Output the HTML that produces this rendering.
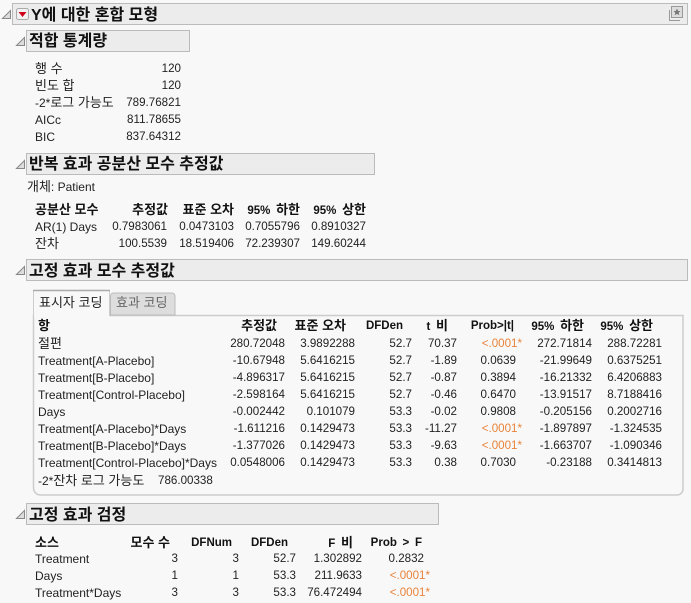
<!DOCTYPE html>
<html><head><meta charset="utf-8"><style>
html,body{margin:0;padding:0;background:#f8f8f8}
#p{position:relative;width:691px;height:603px;overflow:hidden;background:#f8f8f8;font-family:"Liberation Sans","Noto Sans CJK KR",sans-serif;font-size:12px;color:#222}
#p span{position:absolute;white-space:nowrap;line-height:16px;height:16px}
#p span[style*="right"]:not(.b){font-size:11.6px}
#p .b{font-weight:bold;color:#111;font-size:11.5px;word-spacing:2.5px}
#p .o{color:#e8843c}
#p .h{font-weight:bold;font-size:16px;line-height:20px;height:20px;color:#111}
k{font-size:13px;word-spacing:0}
#p .h k{font-size:16px}
.x{position:absolute;box-sizing:border-box;background:#ececec;border:1px solid #bbb}
svg{position:absolute}
</style></head><body><div id="p">
<div class="x" style="left:12px;top:3px;width:676px;height:22px"></div>
<div class="x" style="left:26px;top:30px;width:164px;height:22px"></div>
<div class="x" style="left:26px;top:153px;width:349px;height:22px"></div>
<div class="x" style="left:26px;top:259px;width:662px;height:22px"></div>
<div class="x" style="left:26px;top:503px;width:413px;height:22px"></div>

<svg style="left:0;top:0" width="691" height="603">
<g fill="#ddd" stroke="#888" stroke-width="1">
<path d="M2.5 18.5L10.5 10.5V18.5Z"/><path d="M16.5 45.5L24.5 37.5V45.5Z"/><path d="M16.5 168.5L24.5 160.5V168.5Z"/><path d="M16.5 274.5L24.5 266.5V274.5Z"/><path d="M16.5 518.5L24.5 510.5V518.5Z"/>
</g>
<rect x="16.5" y="8.5" width="12" height="11" rx="2" fill="#f2f2f2" stroke="#aaa"/>
<path d="M18.5 12H26.5L22.5 17Z" fill="#d0021b"/>
<rect x="671.5" y="6.5" width="11" height="11" fill="#ddd" stroke="#999"/>
<path d="M669.5 10V20.5H680" fill="none" stroke="#999"/>
<path d="M677 8.5L678.2 11H680.5L678.7 12.7L679.3 15.2L677 13.9L674.7 15.2L675.3 12.7L673.5 11H675.8Z" fill="#777"/>
<path d="M33.5 315.5V488a7 7 0 0 0 7 7H677a6 6 0 0 0 6-6V315.5Z" fill="#f8f8f8" stroke="#ccc" stroke-width="1.5"/>
<path d="M110.5 315V296a3 3 0 0 1 3-3H172a3 3 0 0 1 3 3V315Z" fill="#ddd" stroke="#bbb"/>
<path d="M33.5 315.5V290.5H109.5V315.5" fill="#f8f8f8" stroke="#ccc"/>
<path d="M33 290.5H110" stroke="#aaa" stroke-width="1.5"/>
<path d="M34 315.5H109" stroke="#f8f8f8" stroke-width="2"/>
</svg>

<span class="h" style="left:31px;top:6px">Y에 대한 혼합 모형</span>
<span class="h" style="left:29px;top:32px">적합 통계량</span>
<span class="h" style="left:29px;top:155px">반복 효과 공분산 모수 추정값</span>
<span class="h" style="left:29px;top:262px">고정 효과 모수 추정값</span>
<span class="h" style="left:29px;top:506px">고정 효과 검정</span>

<span style="left:35px;top:61px"><k>행 수</k></span><span style="right:510px;top:61px">120</span>
<span style="left:35px;top:78px"><k>빈도 합</k></span><span style="right:510px;top:78px">120</span>
<span style="left:35px;top:95px">-2*<k>로그 가능도</k></span><span style="right:510px;top:95px">789.76821</span>
<span style="left:35px;top:112px">AICc</span><span style="right:510px;top:112px">811.78655</span>
<span style="left:35px;top:129px">BIC</span><span style="right:510px;top:129px">837.64312</span>

<span style="left:27px;top:179px"><k>개체</k>: Patient</span>
<span class="b" style="left:35px;top:202px"><k>공분산 모수</k></span><span class="b" style="right:523px;top:202px"><k>추정값</k></span><span class="b" style="right:457px;top:202px"><k>표준 오차</k></span><span class="b" style="right:391px;top:202px">95% <k>하한</k></span><span class="b" style="right:325px;top:202px">95% <k>상한</k></span>
<span style="left:35px;top:219px">AR(1) Days</span><span style="right:524px;top:219px">0.7983061</span><span style="right:457px;top:219px">0.0473103</span><span style="right:391px;top:219px">0.7055796</span><span style="right:325px;top:219px">0.8910327</span>
<span style="left:35px;top:236px"><k>잔차</k></span><span style="right:524px;top:236px">100.5539</span><span style="right:457px;top:236px">18.519406</span><span style="right:391px;top:236px">72.239307</span><span style="right:325px;top:236px">149.60244</span>

<span style="left:39px;top:295px"><k>표시자 코딩</k></span><span style="left:116px;top:295px;color:#666"><k>효과 코딩</k></span>

<span class="b" style="left:38px;top:318px"><k>항</k></span><span class="b" style="right:414px;top:318px"><k>추정값</k></span><span class="b" style="right:345px;top:318px"><k>표준 오차</k></span><span class="b" style="right:288px;top:318px">DFDen</span><span class="b" style="right:243px;top:318px">t <k>비</k></span><span class="b" style="right:177px;top:318px">Prob&gt;|t|</span><span class="b" style="right:107px;top:318px">95% <k>하한</k></span><span class="b" style="right:38px;top:318px">95% <k>상한</k></span>

<span style="left:38px;top:336px"><k>절편</k></span><span style="right:406px;top:336px">280.72048</span><span style="right:336px;top:336px">3.9892288</span><span style="right:279px;top:336px">52.7</span><span style="right:234px;top:336px">70.37</span><span class="o" style="right:169px;top:336px">&lt;.0001*</span><span style="right:99px;top:336px">272.71814</span><span style="right:29px;top:336px">288.72281</span>
<span style="left:38px;top:353px">Treatment[A-Placebo]</span><span style="right:406px;top:353px">-10.67948</span><span style="right:336px;top:353px">5.6416215</span><span style="right:279px;top:353px">52.7</span><span style="right:234px;top:353px">-1.89</span><span style="right:175px;top:353px">0.0639</span><span style="right:99px;top:353px">-21.99649</span><span style="right:29px;top:353px">0.6375251</span>
<span style="left:38px;top:370px">Treatment[B-Placebo]</span><span style="right:406px;top:370px">-4.896317</span><span style="right:336px;top:370px">5.6416215</span><span style="right:279px;top:370px">52.7</span><span style="right:234px;top:370px">-0.87</span><span style="right:175px;top:370px">0.3894</span><span style="right:99px;top:370px">-16.21332</span><span style="right:29px;top:370px">6.4206883</span>
<span style="left:38px;top:387px">Treatment[Control-Placebo]</span><span style="right:406px;top:387px">-2.598164</span><span style="right:336px;top:387px">5.6416215</span><span style="right:279px;top:387px">52.7</span><span style="right:234px;top:387px">-0.46</span><span style="right:175px;top:387px">0.6470</span><span style="right:99px;top:387px">-13.91517</span><span style="right:29px;top:387px">8.7188416</span>
<span style="left:38px;top:404px">Days</span><span style="right:406px;top:404px">-0.002442</span><span style="right:336px;top:404px">0.101079</span><span style="right:279px;top:404px">53.3</span><span style="right:234px;top:404px">-0.02</span><span style="right:175px;top:404px">0.9808</span><span style="right:99px;top:404px">-0.205156</span><span style="right:29px;top:404px">0.2002716</span>
<span style="left:38px;top:421px">Treatment[A-Placebo]*Days</span><span style="right:406px;top:421px">-1.611216</span><span style="right:336px;top:421px">0.1429473</span><span style="right:279px;top:421px">53.3</span><span style="right:234px;top:421px">-11.27</span><span class="o" style="right:169px;top:421px">&lt;.0001*</span><span style="right:99px;top:421px">-1.897897</span><span style="right:29px;top:421px">-1.324535</span>
<span style="left:38px;top:438px">Treatment[B-Placebo]*Days</span><span style="right:406px;top:438px">-1.377026</span><span style="right:336px;top:438px">0.1429473</span><span style="right:279px;top:438px">53.3</span><span style="right:234px;top:438px">-9.63</span><span class="o" style="right:169px;top:438px">&lt;.0001*</span><span style="right:99px;top:438px">-1.663707</span><span style="right:29px;top:438px">-1.090346</span>
<span style="left:38px;top:455px">Treatment[Control-Placebo]*Days</span><span style="right:406px;top:455px">0.0548006</span><span style="right:336px;top:455px">0.1429473</span><span style="right:279px;top:455px">53.3</span><span style="right:234px;top:455px">0.38</span><span style="right:175px;top:455px">0.7030</span><span style="right:99px;top:455px">-0.23188</span><span style="right:29px;top:455px">0.3414813</span>
<span style="left:38px;top:473px">-2*<k>잔차 로그 가능도</k></span><span style="left:158px;top:473px;font-size:11.6px">786.00338</span>

<span class="b" style="left:35px;top:535px"><k>소스</k></span><span class="b" style="right:521px;top:535px"><k>모수 수</k></span><span class="b" style="right:459px;top:535px">DFNum</span><span class="b" style="right:403px;top:535px">DFDen</span><span class="b" style="right:338px;top:535px">F <k>비</k></span><span class="b" style="right:269px;top:535px">Prob &gt; F</span>
<span style="left:35px;top:551px">Treatment</span><span style="right:513px;top:551px">3</span><span style="right:452px;top:551px">3</span><span style="right:395px;top:551px">52.7</span><span style="right:329px;top:551px">1.302892</span><span style="right:267px;top:551px">0.2832</span>
<span style="left:35px;top:568px">Days</span><span style="right:513px;top:568px">1</span><span style="right:452px;top:568px">1</span><span style="right:395px;top:568px">53.3</span><span style="right:329px;top:568px">211.9633</span><span class="o" style="right:261px;top:568px">&lt;.0001*</span>
<span style="left:35px;top:585px">Treatment*Days</span><span style="right:513px;top:585px">3</span><span style="right:452px;top:585px">3</span><span style="right:395px;top:585px">53.3</span><span style="right:329px;top:585px">76.472494</span><span class="o" style="right:261px;top:585px">&lt;.0001*</span>
</div></body></html>
